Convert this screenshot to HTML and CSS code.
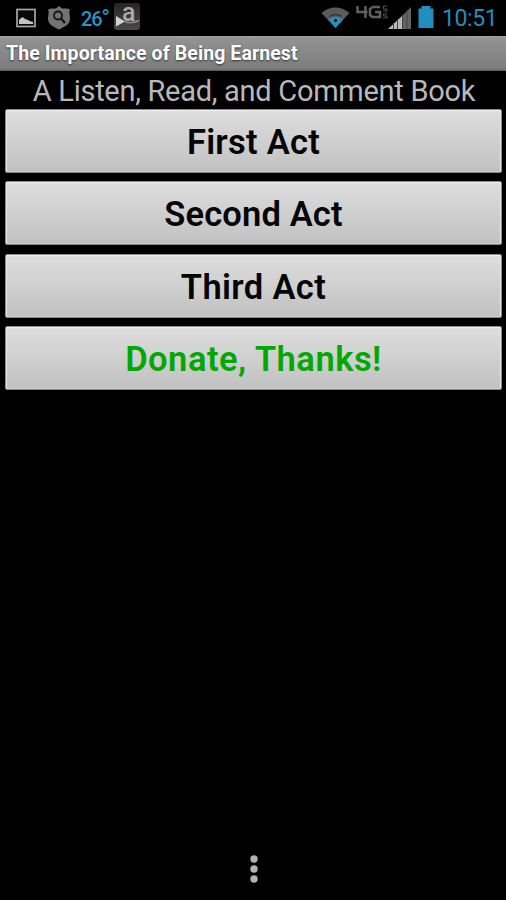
FILE: index.html
```
<!DOCTYPE html>
<html lang="en">
<head>
<meta charset="utf-8">
<title>The Importance of Being Earnest</title>
<link rel="stylesheet" href="styles.css">
</head>
<body>
<div class="screen">
  <header class="status">
    <div class="notifications">
      <svg class="picture" width="20" height="20" viewBox="0 0 20 20"><rect x="1" y="1.500" width="18" height="17" fill="#080808" stroke="#a6a6a6" stroke-width="1.700"/><path d="M3 16V12l2-2 2-.7 2.500 2 2 .4 2 1.300L17 14v2z" fill="#c4c4c4"/></svg>
      <svg class="shield" width="24" height="24" viewBox="0 0 24 24"><path d="M12 0l3 2.500h5l3 1c-1.500 3 0 6 0 9 0 6-5 8-11 11C6 20.500 1 18.500 1 12.500c0-3 1.500-6 0-9l3-1h5z" fill="#737373"/><circle cx="11" cy="9.500" r="4" fill="none" stroke="#151515" stroke-width="1.800"/><path d="M14 12.500l4 4.500" stroke="#151515" stroke-width="2.500"/></svg>
      <span class="temperature">26<span class="degree">°</span></span>
      <span class="store"><span class="store-letter">a</span>
        <svg class="store-mark" width="26" height="27" viewBox="0 0 26 27"><path d="M11 19q7 2 14-1.500" fill="none" stroke="#8c8c8c" stroke-width="1.500"/><path d="M2 13l9 5.500-9 5z" fill="#d2d2d2"/></svg>
      </span>
    </div>
    <div class="system">
      <svg class="wifi" width="29" height="22" viewBox="0 0 29 22"><path d="M.5 6C8-1.500 21-1.500 28.500 6L14.500 21z" fill="#5b5b5b"/><path d="M7 12.500q7.500-5 15 0L14.500 21z" fill="#238dbb"/><path d="M8.500 9.500q6-4 12 0" fill="none" stroke="#333" stroke-width="1.500"/><circle cx="14.500" cy="13.500" r="2.500" fill="#15313d" stroke="#4ba6c6"/></svg>
      <span class="network"><svg width="33" height="15" viewBox="0 0 33 15"><path d="M1.500 1v6h10M9.500 1v12M24 2h-7l-3 2v6l2 2h8V7h-5" fill="none" stroke="#606060" stroke-width="2.500"/><path d="M31 1h-3.500v3H31v2h-4M31 9h-3.500v2H31v2h-4" fill="none" stroke="#505050" stroke-width="1"/></svg></span>
      <svg class="signal" width="24" height="22" viewBox="0 0 24 22"><path d="M0 22L14 9v13z" fill="#b9b9b9"/><path d="M14 22V9L23 0v22z" fill="#626262"/><path d="M5.500 16v6M9.500 12v10M14.500 8v14M19 3v19" stroke="#444" stroke-width="1"/></svg>
      <svg class="battery" width="16" height="22" viewBox="0 0 16 22"><path d="M3.500 0h9v2.500H15.500V22H.5V2.500h3z" fill="#238dbb"/></svg>
      <span class="clock">10:51</span>
    </div>
  </header>
  <h1 class="titlebar">The Importance of Being Earnest</h1>
  <main>
    <p class="subtitle">A Listen, Read, and Comment Book</p>
    <nav class="acts">
      <button class="act">First Act</button>
      <button class="act second">Second Act</button>
      <button class="act third">Third Act</button>
      <button class="act donate">Donate, Thanks!</button>
    </nav>
  </main>
  <footer class="overflow"><svg width="10" height="30" viewBox="0 0 10 30" fill="#b2b2b2"><circle cx="5" cy="5" r="3.700"/><circle cx="5" cy="15" r="3.700"/><circle cx="5" cy="25" r="3.700"/></svg></footer>
</div>
</body>
</html>
```
FILE: styles.css
```
* { box-sizing: border-box; }
body { margin: 0; background: #000; font-family: Roboto, sans-serif; }
svg { display: block; flex: none; }
.screen { width: 506px; height: 900px; display: flex; flex-direction: column; overflow: hidden; background: #000; }
.status { height: 36px; display: flex; justify-content: space-between; }
.notifications { display: flex; padding-left: 16px; }
.picture { margin-top: 8px; }
.shield { margin: 6px 0 0 11px; }
.temperature { margin-left: 10px; width: 26px; color: #2795c1; font-size: 20px; font-weight: 500; line-height: 38px; letter-spacing: -1.200px; white-space: nowrap; }
.degree { font-size: 23px; line-height: 20px; }
.store { position: relative; width: 26px; height: 27px; margin: 3px 0 0 7px; border-radius: 3px; background: linear-gradient(#252525, #494949); }
.store-letter { position: absolute; left: 8px; top: -6px; color: #aaa; font-size: 25px; font-weight: 500; line-height: 32px; }
.store-mark { position: absolute; left: 0; top: 0; }
.system { display: flex; padding-right: 10px; }
.wifi { margin-top: 7px; }
.network { margin: 5px 0 0 6px; }
.signal { margin: 7px 0 0 -1px; }
.battery { margin: 6px 0 0 6px; }
.clock { width: 54px; margin-left: 8px; color: #238dbb; font-size: 23px; line-height: 38px; letter-spacing: -.4px; white-space: nowrap; }
.titlebar { margin: 0; height: 35px; padding-left: 6px; background: linear-gradient(#a0a0a0 0, #929292 3px, #7c7c7c 33px, #555 35px); color: #fff; font-size: 19.500px; letter-spacing: .1px; line-height: 36px; font-weight: 700; white-space: nowrap; text-shadow: 0 1px 2px #333; }
.subtitle { margin: 0; height: 38px; color: #b8b8b8; font-size: 29px; letter-spacing: -.28px; line-height: 40px; text-align: center; white-space: nowrap; padding-left: 2px; }
.acts { display: flex; flex-direction: column; gap: 8.400px; padding: 0 4px 0 5px; }
.act { height: 64px; padding: 2px 0 0; border: 1px solid #8b8b8b; border-radius: 2px; background: linear-gradient(#dedede, #c1c1c1); box-shadow: inset 0 1px 1px #f0f0f0, inset -1px 0 1px #e3e3e3, inset 1px 0 1px #e3e3e3; font-family: inherit; color: #050505; font-size: 34.500px; font-weight: 600; line-height: 60px; letter-spacing: .25px; }
.second { letter-spacing: .15px; }
.third { letter-spacing: .35px; }
.donate { color: #00a800; letter-spacing: .5px; }
.overflow { margin-top: auto; height: 46px; padding-left: 249px; }
```
